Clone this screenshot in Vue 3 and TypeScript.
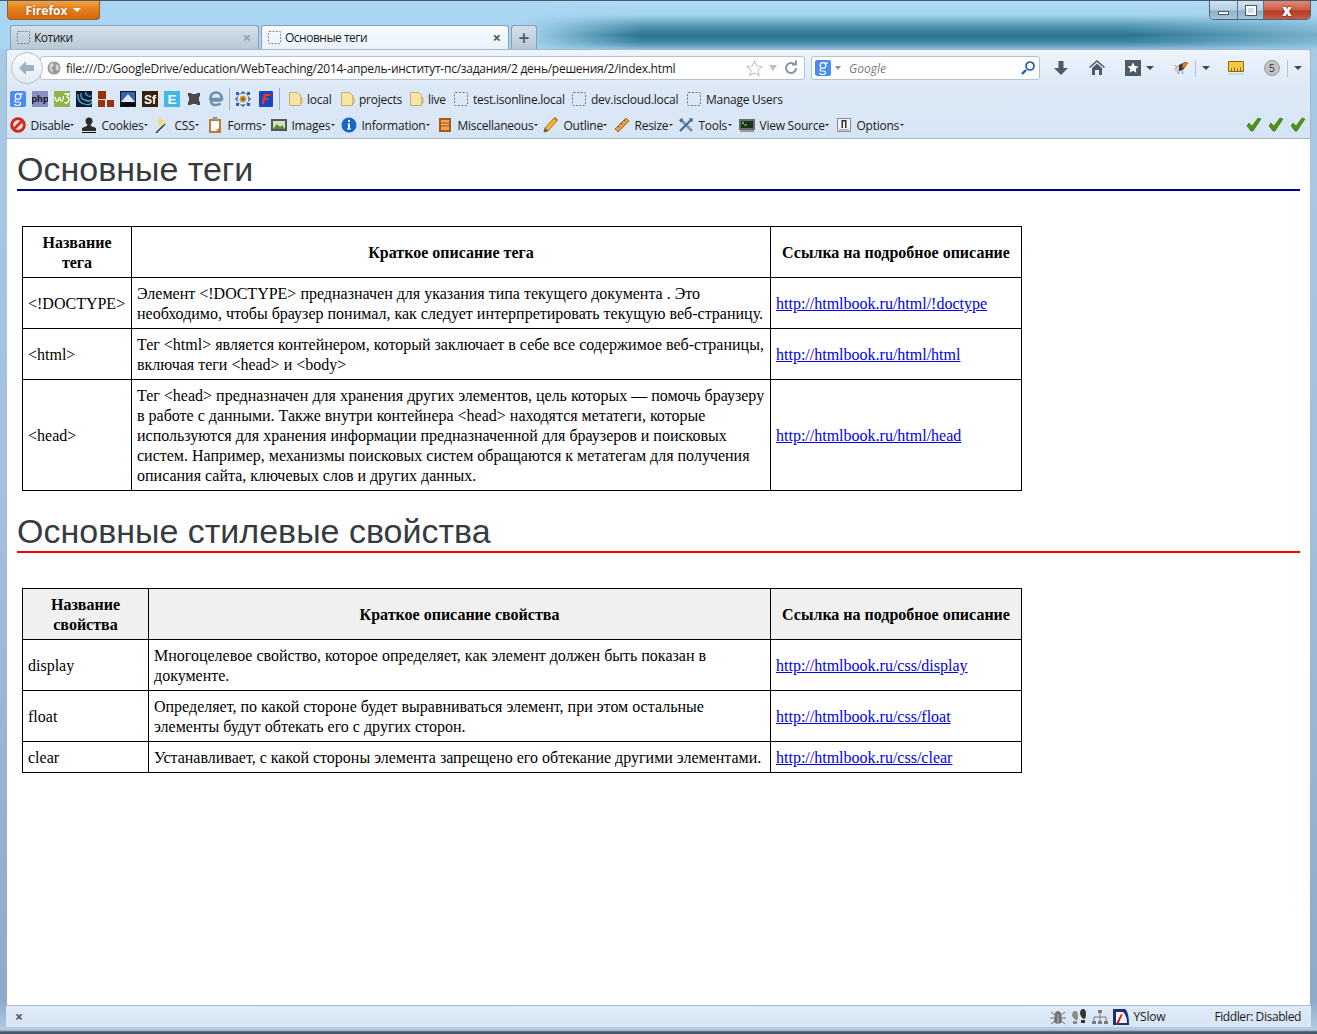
<script setup lang="ts">
interface Shape {
  d?: string
  f?: string
  s?: string
  w?: number
  t?: string
  x?: number
  y?: number
  z?: number
}

const disc = (x: number, y: number, r: number) =>
  `M${x - r} ${y}a${r} ${r} 0 1 0 ${r * 2} 0a${r} ${r} 0 1 0 ${-r * 2} 0z`
const label = (t: string, x: number, y: number, z: number, f: string): Shape => ({ t, x, y, z, f })

const icons: Record<string, Shape[]> = {
  google: [{ d: 'M0 2q0-2 2-2h12q2 0 2 2v12q0 2-2 2H2q-2 0-2-2z', f: '#4a8af4' }, { d: disc(8, 5.500, 2.800), f: 'none', s: '#fff', w: 1.300 }, { d: 'M6 8.500q-2 1.500 0 2.500h3q2 .5 1.500 2t-3 1.500-3-1.500', f: 'none', s: '#fff', w: 1.200 }, { d: 'M10 3h3', s: '#fff', w: 1.200 }],
  php: [{ d: 'M0 0h16v16H0z', f: '#8a8cc4' }, label('php', 8, 11, 9.500, '#111')],
  w3: [
    { d: 'M0 0h16v16H0z', f: '#8cb44a' },
    { d: 'M1 6q1 5 2.500 4T5.500 6q.5 4 2 4t2-5M10.500 3H15l-2 3q3 1 1.500 4t-4 1.500', s: '#fff', w: 1.300, f: 'none' },
  ],
  jquery: [
    { d: 'M0 0h16v16H0z', f: '#101e2c' },
    { d: 'M2 3q-1 8 6 10t8-2M5 2q-1 6 5 7.500t6-1.500M10 1q-1 3 2 4t3-.5', s: '#4aa8dc', w: 1.300, f: 'none' },
  ],
  blocks: [{ d: 'M0 0h8v8H0zM0 9h7v7H0zM9 9h7v7H9z', f: '#993305' }],
  mountain: [
    { d: 'M0 0h16v16H0z', f: '#0c1624' },
    { d: 'M1 1h14v10H1z', f: '#3a62a8' },
    { d: 'M1 11l7-8 7 8z', f: '#dce8f8' },
    { d: 'M1 11h14v4H1z', f: '#05070c' },
  ],
  sf: [{ d: 'M0 0h16v16H0z', f: '#38200a' }, label('Sf', 8, 12.500, 12, '#fff')],
  e: [{ d: 'M0 0h16v16H0z', f: '#3fb9ea' }, label('E', 8, 13, 13.500, '#fff')],
  puzzle: [{ d: 'M2 2h3l1 1h4l1-1h3v3l-1 1v4l1 1v3h-3l-1-1H6l-1 1H2v-3l1-1V6L2 5z', f: '#4a4a4a' }],
  ie: [
    { d: 'M13.500 9.500H3q0 4.500 4.500 4.500 3 0 5-1.500M2.500 8q0-6.500 5.500-6.500T14 8z', f: 'none', s: '#6d91a8', w: 2.600 },
  ],
  target: [
    { d: 'M8 0l8 8-8 8-8-8z', f: '#2a5fb8' },
    { d: 'M1 1h3v3H1zM12 1h3v3h-3zM1 12h3v3H1zM12 12h3v3h-3z', f: '#2a5fb8' },
    { d: disc(8, 8, 5.500), f: '#e8eef8' },
    { d: disc(8, 8, 3.500), f: '#e09a20' },
    { d: disc(8, 8, 1.500), f: '#2a5fb8' },
  ],
  firebird: [
    { d: 'M1 1q0-1 1-1h12q1 0 1 1v14q0 1-1 1H2q-1 0-1-1z', f: '#1b45c9' },
    { d: 'M6 3h7l-1 2H8l-.5 2H11l-1 2H7l-1 4H3.500z', f: '#f03a10' },
  ],
  folder: [
    { d: 'M2.500 1.500h8l3 2.500v10.500h-11z', f: '#f7e6a3', s: '#c2ad6a', w: 1 },
    { d: 'M13.500 6l1.500 1v5l-1.500 1', f: '#e8cf85', s: '#c2ad6a', w: 1 },
  ],
  blank: [{ d: 'M2.500 1.500h11q1 0 1 1v11q0 1-1 1h-11q-1 0-1-1v-11q0-1 1-1z', f: 'none', s: '#747474', w: 1 }],
  disable: [
    { d: disc(8, 8, 7.800), f: '#d0281c' },
    { d: disc(8, 8, 4.800), f: '#fbe9e6' },
    { d: 'M3.500 10.500l7-7 2 2-7 7z', f: '#d0281c' },
  ],
  cookies: [
    { d: disc(8, 4, 3.500), f: '#2e2a26' },
    { d: 'M6.500 6h3l.5 3 5 2v3H1v-3l5-2z', f: '#2e2a26' },
    { d: 'M1 15h14v1H1z', f: '#111' },
  ],
  css: [
    { d: 'M1.500 15.500l9-9 1 1-9 9z', f: '#333' },
    { d: 'M10 6l4-5 1 1-4 5z', f: '#ddd' },
    { d: 'M6 0l1.500 3L11 2 9 5l1 3-3-1-3 2 .5-3.500L2 3.500l3 0z', f: '#f6dd6a' },
  ],
  forms: [
    { d: 'M2 2h12v14H2z', f: '#c07a32' },
    { d: 'M4 4h8v7l-3 3H4z', f: '#fdfdfd' },
    { d: 'M5.500 0h5v3h-5z', f: '#9a9a9a' },
  ],
  images: [
    { d: 'M0 2h16v12H0z', f: '#555' },
    { d: 'M2 4h12v8H2z', f: '#d2e4b4' },
    { d: 'M2 12l4-5 3 3 2-2 3 4z', f: '#5c8a3a' },
  ],
  info: [
    { d: disc(8, 8, 7.500), f: '#1566c8' },
    { d: 'M7 3h2v2H7zM6.500 6.500h2.500v5h1v1H6v-1h1v-4h-.5z', f: '#fff' },
  ],
  misc: [
    { d: 'M2 1h12v14H2z', f: '#a8581a' },
    { d: 'M4 3h8v10H4z', f: '#eda552' },
    { d: 'M4 6h8M4 9h8', s: '#a8581a', w: 1 },
  ],
  outline: [
    { d: 'M1 15l1-4L11 1l3 3L5 14z', f: '#f2b134', s: '#b8741c', w: 1 },
    { d: 'M11 1l3 3 1-1-3-3z', f: '#d84a3a' },
    { d: 'M1 15l1-4 3 3z', f: '#555' },
  ],
  resize: [
    { d: 'M1 12L12 1l3 3L4 15z', f: '#e0a050', s: '#a86a22', w: 1 },
    { d: 'M4 9l1.500 1.500M7 6l1.500 1.500M10 3l1.500 1.500', s: '#8a5210', w: 1 },
  ],
  tools: [
    { d: 'M3 3l11 11', s: '#7f93a8', w: 2.600 },
    { d: 'M13 3L2 14', s: '#3d6f9e', w: 2.200 },
    { d: 'M1 3.500L3.500 1l2 2L3 5.500zM11 1l4 .5-.5 3.500-2.500-1.500z', f: '#5d6874' },
  ],
  source: [
    { d: 'M0 2h16v11H0z', f: '#6b6b6b' },
    { d: 'M2 4h12v7H2z', f: '#16331c' },
    { d: 'M3 5l2 1-2 1M5 8h3', s: '#7ed07e', w: 1, f: 'none' },
    { d: 'M1 13h14v2H1z', f: '#999' },
  ],
  options: [
    { d: 'M1.500 1.500h13v13h-13z', f: '#f2f2f2', s: '#8a8a8a', w: 1 },
    { d: 'M5.500 3h5v8h-1.500V4.500H7V11H5.500z', f: '#333' },
    { d: 'M3 12h10v1.500H3z', f: '#a8a8a8' },
  ],
  check: [{ d: 'M1 9l2-3 3 3 6-8 3 1-8 12H5z', f: '#4f9412', s: '#2e6a08', w: 0.600 }],
  star: [{ d: 'M8 1l2.100 4.700 5 .5-3.800 3.300 1.100 5L8 12l-4.400 2.500 1.100-5L.900 6.200l5-.5z', f: '#fff', s: '#bcc4cc', w: 1 }],
  reload: [{ d: 'M13 8a5 5 0 1 1-2-4M9 4.500h4V.5', f: 'none', s: '#8a949e', w: 2 }],
  glass: [{ d: 'M6 10l-4 4', s: '#1e5ea8', w: 2.400 }, { d: disc(10, 6, 4), f: 'none', s: '#1e5ea8', w: 1.700 }],
  download: [{ d: 'M5.500 1h5v7H15l-7 7-7-7h4.500z', f: '#4e5a66' }],
  home: [
    { d: 'M8 0l8 7-1 1-7-6-7 6-1-1z', f: '#4e5a66' },
    { d: 'M8 3.500l5 4.500v7h-3v-5H6v5H3V8z', f: '#4e5a66' },
  ],
  bookmarks: [
    { d: 'M0 0h16v16H0z', f: '#4e5a66' },
    { d: 'M8 2.500l1.700 3.400 3.800.5-2.800 2.500.7 3.800L8 10.800l-3.400 1.900.7-3.800L2.500 6.400l3.800-.5z', f: '#fff' },
  ],
  firebug: [
    { d: 'M1 9q3-5 8-5l-2 8q-4 2-6-3z', f: '#c9c9c9' },
    { d: 'M6 5l6-3 3 1-5 7-4 1z', f: '#3a3a3a' },
    { d: 'M10 3l5-1-2 5-4 1z', f: '#e87a1a' },
    { d: 'M6 12l-1 2M9 11l1 3M2 5l2 2', s: '#888', w: 1 },
  ],
  ruler: [
    { d: 'M.5 1.500h15v10h-15z', f: '#f5c93e', s: '#8d6a14', w: 1 },
    { d: 'M3.500 11V8.500M6.500 11V7.500M9.500 11V8.500M12.500 11V7.500', s: '#8a6a12', w: 1 },
    { d: 'M0 14h16', s: '#b0c4d8', w: 1 },
  ],
  bug: [
    { d: 'M5 4q3-4 6 0l1 9q-4 4-8 0z', f: '#6e6e6e' },
    { d: 'M5 6L1 3M5 9H0M5 12l-4 3M11 6l4-3M11 9h5M11 12l4 3', s: '#6e6e6e', w: 1 },
    { d: 'M8 5v10', s: '#bbb', w: 1 },
  ],
  feet: [
    { d: 'M1 7q0-5 3-5t3 5-2 4-4-4zM2 12h4v3H2z', f: '#8a8a8a' },
    { d: 'M9 5q0-5 3-5t3 5-2 5-4-5zM10 11h4v3h-4z', f: '#333' },
  ],
  tree: [
    { d: 'M6 1h4v3H6zM0 12h4v3H0zM6 12h4v3H6zM12 12h4v3h-4z', f: '#7a7a7a' },
    { d: 'M8 4v8M2 12V8h12v4', f: 'none', s: '#7a7a7a', w: 1 },
  ],
  yslow: [
    { d: 'M0 0h12q4 3 4 16H0z', f: '#1c2f78' },
    { d: 'M3 3h7q4 3 4 11H3z', f: '#f4f6fb' },
    { d: 'M3 15l5-10 1.500.5L5 16z', f: '#d01616' },
  ],
}

const bookmarks = [
  { icon: 'folder', text: 'local', w: 52 },
  { icon: 'folder', text: 'projects', w: 69 },
  { icon: 'folder', text: 'live', w: 45 },
  { icon: 'blank', text: 'test.isonline.local', w: 118 },
  { icon: 'blank', text: 'dev.iscloud.local', w: 115 },
  { icon: 'blank', text: 'Manage Users', w: 100 },
]

const addons = [
  { icon: 'disable', text: 'Disable', w: 71 },
  { icon: 'cookies', text: 'Cookies', w: 73 },
  { icon: 'css', text: 'CSS', w: 53 },
  { icon: 'forms', text: 'Forms', w: 64 },
  { icon: 'images', text: 'Images', w: 70 },
  { icon: 'info', text: 'Information', w: 96 },
  { icon: 'misc', text: 'Miscellaneous', w: 106 },
  { icon: 'outline', text: 'Outline', w: 71 },
  { icon: 'resize', text: 'Resize', w: 64 },
  { icon: 'tools', text: 'Tools', w: 61 },
  { icon: 'source', text: 'View Source', w: 97 },
  { icon: 'options', text: 'Options', w: 70 },
]

const tagRows = [
  {
    name: '<!DOCTYPE>',
    text: 'Элемент <!DOCTYPE> предназначен для указания типа текущего документа . Это необходимо, чтобы браузер понимал, как следует интерпретировать текущую веб-страницу.',
    link: 'http://htmlbook.ru/html/!doctype',
  },
  {
    name: '<html>',
    text: 'Тег <html> является контейнером, который заключает в себе все содержимое веб-страницы, включая теги <head> и <body>',
    link: 'http://htmlbook.ru/html/html',
  },
  {
    name: '<head>',
    text: 'Тег <head> предназначен для хранения других элементов, цель которых — помочь браузеру в работе с данными. Также внутри контейнера <head> находятся метатеги, которые используются для хранения информации предназначенной для браузеров и поисковых систем. Например, механизмы поисковых систем обращаются к метатегам для получения описания сайта, ключевых слов и других данных.',
    link: 'http://htmlbook.ru/html/head',
  },
]

const propRows = [
  {
    name: 'display',
    text: 'Многоцелевое свойство, которое определяет, как элемент должен быть показан в документе.',
    link: 'http://htmlbook.ru/css/display',
  },
  {
    name: 'float',
    text: 'Определяет, по какой стороне будет выравниваться элемент, при этом остальные элементы будут обтекать его с других сторон.',
    link: 'http://htmlbook.ru/css/float',
  },
  {
    name: 'clear',
    text: 'Устанавливает, с какой стороны элемента запрещено его обтекание другими элементами.',
    link: 'http://htmlbook.ru/css/clear',
  },
]
</script>

<template>
  <div class="window">
    <header class="glass">
      <div class="title-row">
        <div class="firefox">Firefox<i class="tri white"></i></div>
        <div class="controls">
          <span class="ctl"><i class="min"></i></span>
          <span class="ctl"><i class="max"></i></span>
          <span class="ctl close">x</span>
        </div>
      </div>
      <div class="tabs">
        <div class="tab">
          <svg class="ico" viewBox="0 0 16 16"><path v-for="(s, i) in icons.blank" :key="i" :d="s.d" :fill="s.f" :stroke="s.s" :stroke-width="s.w" stroke-dasharray="2 1.500" /></svg>
          <span class="tab-title">Котики</span>
          <span class="tab-x dim">×</span>
        </div>
        <div class="tab active">
          <svg class="ico" viewBox="0 0 16 16"><path v-for="(s, i) in icons.blank" :key="i" :d="s.d" :fill="s.f" :stroke="s.s" :stroke-width="s.w" stroke-dasharray="2 1.500" /></svg>
          <span class="tab-title">Основные теги</span>
          <span class="tab-x">×</span>
        </div>
        <div class="tab-new">+</div>
      </div>
    </header>

    <div class="inner">
      <div class="toolbox">
        <div class="nav-row">
          <div class="back">
            <svg viewBox="0 0 20 20" width="20" height="20"><path d="M2 10l7-7v4h8v6H9v4z" fill="#9fb0c2" /></svg>
          </div>
          <div class="urlbar">
            <svg class="globe" viewBox="0 0 16 16">
              <path :d="disc(8, 8, 7.500)" fill="#9a9a9a" />
              <path d="M3 4l4-2 1 3-3 3 2 3-1 3-3-4zM10 3l3 2 1 5-3 1-1-3z" fill="#d4d4d4" />
            </svg>
            <span class="url">file:///D:/GoogleDrive/education/WebTeaching/2014-апрель-институт-пс/задания/2 день/решения/2/index.html</span>
            <svg class="ico star" viewBox="0 0 16 16"><path v-for="(s, i) in icons.star" :key="i" :d="s.d" :fill="s.f" :stroke="s.s" :stroke-width="s.w" /></svg>
            <i class="tri pale"></i>
            <svg class="ico reload" viewBox="0 0 16 16"><path v-for="(s, i) in icons.reload" :key="i" :d="s.d" :fill="s.f" :stroke="s.s" :stroke-width="s.w" /></svg>
          </div>
          <div class="searchbar">
            <svg class="ico" viewBox="0 0 16 16"><path v-for="(s, i) in icons.google" :key="i" :d="s.d" :fill="s.f" :stroke="s.s" :stroke-width="s.w" /></svg>
            <i class="tri grey"></i>
            <span class="search-hint">Google</span>
            <svg class="ico" viewBox="0 0 16 16"><path v-for="(s, i) in icons.glass" :key="i" :d="s.d" :fill="s.f ?? 'none'" :stroke="s.s" :stroke-width="s.w" /></svg>
          </div>
          <div class="tool-icons">
            <span class="ti" v-for="n in ['download', 'home']" :key="n">
              <svg class="ico" viewBox="0 0 16 16"><path v-for="(s, i) in icons[n]" :key="i" :d="s.d" :fill="s.f" /></svg>
            </span>
            <span class="ti wide">
              <svg class="ico" viewBox="0 0 16 16"><path v-for="(s, i) in icons.bookmarks" :key="i" :d="s.d" :fill="s.f" /></svg>
              <i class="tri dark"></i>
            </span>
            <span class="ti bug-btn">
              <svg class="ico" viewBox="0 0 16 16"><path v-for="(s, i) in icons.firebug" :key="i" :d="s.d" :fill="s.f ?? 'none'" :stroke="s.s" :stroke-width="s.w" /></svg>
              <b class="vsep"></b>
              <i class="tri dark"></i>
            </span>
            <span class="ti ruler-btn">
              <svg class="ico" viewBox="0 0 16 16"><path v-for="(s, i) in icons.ruler" :key="i" :d="s.d" :fill="s.f ?? 'none'" :stroke="s.s" :stroke-width="s.w" /></svg>
            </span>
            <span class="badge">5</span>
            <b class="vsep"></b>
            <i class="tri dark last"></i>
          </div>
        </div>

        <div class="bookmarks-row">
          <span
            v-for="n in ['google', 'php', 'w3', 'jquery', 'blocks', 'mountain', 'sf', 'e', 'puzzle', 'ie']"
            :key="n"
            class="bm-icon"
          >
            <svg class="ico" viewBox="0 0 16 16">
              <template v-for="(s, i) in icons[n]" :key="i">
                <text v-if="s.t" :x="s.x" :y="s.y" :font-size="s.z" :fill="s.f" text-anchor="middle" class="svg-text">{{ s.t }}</text>
                <path v-else :d="s.d" :fill="s.f ?? 'none'" :stroke="s.s" :stroke-width="s.w" />
              </template>
            </svg>
          </span>
          <b class="hsep"></b>
          <span v-for="n in ['target', 'firebird']" :key="n" class="bm-icon tight">
            <svg class="ico" viewBox="0 0 16 16"><path v-for="(s, i) in icons[n]" :key="i" :d="s.d" :fill="s.f" /></svg>
          </span>
          <b class="hsep second"></b>
          <span v-for="b in bookmarks" :key="b.text" class="item" :style="{ width: b.w + 'px' }">
            <svg class="ico" viewBox="0 0 16 16">
              <path
                v-for="(s, i) in icons[b.icon]"
                :key="i"
                :d="s.d"
                :fill="s.f"
                :stroke="s.s"
                :stroke-width="s.w"
                :stroke-dasharray="b.icon === 'blank' ? '2 1.500' : undefined"
              />
            </svg>
            <span>{{ b.text }}</span>
          </span>
        </div>

        <div class="addons-row">
          <span v-for="a in addons" :key="a.text" class="item addon" :style="{ width: a.w + 'px' }">
            <svg class="ico" viewBox="0 0 16 16"><path v-for="(s, i) in icons[a.icon]" :key="i" :d="s.d" :fill="s.f ?? 'none'" :stroke="s.s" :stroke-width="s.w" /></svg>
            <span>{{ a.text }}</span><i class="tiny"></i>
          </span>
          <span class="checks">
            <svg v-for="k in 3" :key="k" class="ico" viewBox="0 0 16 16"><path v-for="(s, i) in icons.check" :key="i" :d="s.d" :fill="s.f" :stroke="s.s" :stroke-width="s.w" /></svg>
          </span>
        </div>
      </div>

      <main class="content">
        <h1 class="blue">Основные теги</h1>
        <table>
          <colgroup><col class="c-tag" /><col class="c-tdesc" /><col class="c-link" /></colgroup>
          <thead>
            <tr><th>Название тега</th><th>Краткое описание тега</th><th>Ссылка на подробное описание</th></tr>
          </thead>
          <tbody>
            <tr v-for="r in tagRows" :key="r.name">
              <td>{{ r.name }}</td>
              <td>{{ r.text }}</td>
              <td><a href="#">{{ r.link }}</a></td>
            </tr>
          </tbody>
        </table>

        <h1 class="red">Основные стилевые свойства</h1>
        <table class="props">
          <colgroup><col class="c-prop" /><col class="c-pdesc" /><col class="c-link" /></colgroup>
          <thead>
            <tr><th>Название свойства</th><th>Краткое описание свойства</th><th>Ссылка на подробное описание</th></tr>
          </thead>
          <tbody>
            <tr v-for="r in propRows" :key="r.name">
              <td>{{ r.name }}</td>
              <td>{{ r.text }}</td>
              <td><a href="#">{{ r.link }}</a></td>
            </tr>
          </tbody>
        </table>
      </main>

      <footer class="status">
        <span class="status-x">×</span>
        <span class="status-right">
          <svg v-for="n in ['bug', 'feet', 'tree', 'yslow']" :key="n" class="ico" viewBox="0 0 16 16">
            <path v-for="(s, i) in icons[n]" :key="i" :d="s.d" :fill="s.f ?? 'none'" :stroke="s.s" :stroke-width="s.w" />
          </svg>
          <span class="yslow">YSlow</span>
          <span class="fiddler">Fiddler: Disabled</span>
        </span>
      </footer>
    </div>
  </div>
</template>

<style>
html,
body {
  margin: 0;
  overflow: hidden;
}
</style>

<style scoped>
.window {
  width: 1317px;
  height: 1034px;
  display: flex;
  flex-direction: column;
  box-sizing: border-box;
  padding-bottom: 7px;
  overflow: hidden;
  font-family: "Open Sans", "Noto Sans", sans-serif;
  font-size: 12px;
  color: #1a1a1a;
  background: linear-gradient(180deg, #a9cbe6 0, #a3c0de 500px, #8ea9c9 1000px, #b4cce2 1030px, #46586a 1032px, #46586a 1034px);
}

.ico {
  width: 16px;
  height: 16px;
  flex: none;
  display: block;
}
.svg-text {
  font-family: "Liberation Sans", sans-serif;
  font-weight: 700;
}

/* Glass top */
.glass {
  height: 49px;
  flex: none;
  background:
    linear-gradient(90deg, #a9d6f2 0, #a9d6f2 520px, rgba(169, 214, 242, 0) 640px, rgba(169, 214, 242, 0) 1130px, rgba(169, 214, 242, 0.6) 1317px),
    linear-gradient(180deg, #aedbf5 0, #a4d3ee 14px, #5a9cb8 24px, #2c7490 34px, #3b86a5 41px, #93c2dd 49px);
  border-top: 1px solid #46586a;
  box-sizing: border-box;
}
.title-row {
  height: 24px;
  display: flex;
  justify-content: space-between;
  align-items: flex-start;
  padding: 0 6px 0 7px;
}
.firefox {
  width: 93px;
  height: 19px;
  box-sizing: border-box;
  display: flex;
  align-items: center;
  justify-content: center;
  gap: 6px;
  color: #fff;
  font-weight: 700;
  text-shadow: 0 0 2px #8a4005;
  background: linear-gradient(180deg, #f6a13c 0, #e57f1e 45%, #d5660f 100%);
  border: 1px solid #9a5b1e;
  border-top: 0;
  border-radius: 0 0 4px 4px;
}
.controls {
  display: flex;
  height: 19px;
  border: 1px solid #4d6478;
  border-top: 0;
  border-radius: 0 0 5px 5px;
  overflow: hidden;
  box-sizing: border-box;
}
.ctl {
  width: 27px;
  display: flex;
  align-items: center;
  justify-content: center;
  background: linear-gradient(180deg, #cfe3f1 0, #b6d0e2 50%, #8fb1c6 55%, #a6c6d8 100%);
  border-right: 1px solid #5c7388;
}
.ctl + .ctl {
  width: 25px;
}
.ctl .min {
  width: 9px;
  height: 2px;
  margin-top: 6px;
  background: #fff;
  border: 1px solid #4a5a6a;
}
.ctl .max {
  width: 6px;
  height: 5px;
  background: #cfe0ec;
  border: 2px solid #fff;
  outline: 1px solid #4a5a6a;
}
.ctl.close {
  width: 46px;
  border: 0;
  background: linear-gradient(180deg, #df8a78 0, #cf5a44 50%, #b83a24 55%, #c95a44 100%);
  color: #fff;
  font-weight: 800;
  font-size: 15px;
  line-height: 1;
  text-shadow: 0 0 2px #3a1010;
}

/* Tabs */
.tabs {
  display: flex;
  height: 24px;
  padding-left: 10px;
  gap: 2px;
}
.tab {
  width: 249px;
  box-sizing: border-box;
  padding: 0 7px 0 5px;
  display: flex;
  align-items: center;
  gap: 3px;
  border: 1px solid #8b9db0;
  border-bottom: 0;
  border-radius: 3px 3px 0 0;
  background: linear-gradient(180deg, #d4e0ea 0, #b9c8d6 100%);
}
.tab.active {
  width: 248px;
  background: linear-gradient(180deg, #f8fbfe 0, #e9f2fb 100%);
}
.tab .ico {
  width: 15px;
  height: 15px;
}
.tab-title {
  flex: 1;
  letter-spacing: -0.5px;
}
.tab-x {
  font-size: 15px;
  font-weight: 700;
  line-height: 1;
  color: #555;
}
.tab-x.dim {
  color: #93a0ac;
}
.tab-new {
  width: 26px;
  display: flex;
  align-items: center;
  justify-content: center;
  border: 1px solid #8b9db0;
  border-bottom: 0;
  border-radius: 3px 3px 0 0;
  box-sizing: border-box;
  background: linear-gradient(180deg, #d4e0ea 0, #b9c8d6 100%);
  color: #4e5a66;
  font-size: 19px;
  font-weight: 600;
}

/* Toolbars */
.inner {
  flex: 1;
  min-height: 0;
  margin: 0 6px;
  display: flex;
  flex-direction: column;
}
.toolbox {
  height: 90px;
  flex: none;
  box-sizing: border-box;
  background: linear-gradient(180deg, #edf4fc 0, #dde9f7 40%, #d6e5f5 100%);
  border: 1px solid #a4b7cb;
  border-bottom: 1px solid #a3b5c8;
  border-radius: 3px 3px 0 0;
}
.nav-row {
  height: 36px;
  display: flex;
  align-items: center;
  position: relative;
  padding-left: 33px;
}
.back {
  position: absolute;
  left: 4px;
  top: 2px;
  width: 30px;
  height: 30px;
  border-radius: 50%;
  border: 1px solid #b3c0ce;
  background: linear-gradient(180deg, #fbfcfe, #e3ebf4);
  display: flex;
  align-items: center;
  justify-content: center;
  z-index: 1;
}
.urlbar,
.searchbar {
  height: 24px;
  box-sizing: border-box;
  background: #fff;
  border: 1px solid #b5c2d0;
  border-radius: 3px;
  display: flex;
  align-items: center;
}
.urlbar {
  width: 765px;
  padding-left: 6px;
  padding-right: 5px;
}
.globe {
  width: 14px;
  height: 14px;
  flex: none;
  margin-right: 5px;
}
.url {
  flex: 1;
  white-space: nowrap;
  letter-spacing: -0.26px;
}
.star {
  width: 17px;
  height: 17px;
}
.pale {
  margin: 0 6px 0 6px;
}
.searchbar {
  width: 229px;
  margin-left: 6px;
  padding: 0 3px 0 3px;
}
.search-hint {
  flex: 1;
  margin-left: 8px;
  color: #7b7b7b;
  font-style: italic;
}
.tool-icons {
  display: flex;
  align-items: center;
  padding-left: 13px;
}
.ti {
  width: 36px;
  display: flex;
  align-items: center;
}
.ti.wide {
  width: 48px;
  gap: 5px;
}
.ti.bug-btn {
  width: 55px;
  gap: 6px;
}
.ti.ruler-btn {
  width: 36px;
}
.badge {
  width: 16px;
  height: 16px;
  margin-right: 7px;
  border-radius: 50%;
  background: #c4c4c4;
  border: 1px solid #9a9a9a;
  box-sizing: border-box;
  font-size: 11px;
  line-height: 14px;
  text-align: center;
  color: #333;
}
.vsep {
  width: 1px;
  height: 17px;
  background: #b4c3d2;
  flex: none;
}
.last {
  margin-left: 6px;
}
.tri {
  width: 0;
  height: 0;
  flex: none;
  border-left: 3.5px solid transparent;
  border-right: 3.5px solid transparent;
  border-top: 4px solid #8a949e;
}
.tri.white {
  border-top-color: #fff;
  border-left-width: 4px;
  border-right-width: 4px;
}
.tri.pale {
  border-top-color: #b8c2cc;
  border-top-width: 6px;
  border-left-width: 4px;
  border-right-width: 4px;
}
.tri.grey {
  margin-left: 4px;
  border-top-color: #8f8f8f;
}
.tri.dark {
  border-top-color: #3f4a55;
  border-left-width: 4px;
  border-right-width: 4px;
}
.bookmarks-row,
.addons-row {
  height: 26px;
  display: flex;
  align-items: center;
  padding-left: 3px;
}
.bm-icon {
  width: 22px;
  flex: none;
}
.bm-icon.tight {
  width: 23px;
}
.hsep {
  width: 1px;
  height: 22px;
  background: #9fb0c2;
  margin: 0 5px 0 -1px;
  flex: none;
}
.hsep.second {
  margin: 0 7px 0 -2px;
}
.item {
  display: flex;
  align-items: center;
  gap: 4px;
  flex: none;
  white-space: nowrap;
  letter-spacing: -0.25px;
}
.addon {
  gap: 4.5px;
}
.tiny {
  display: inline-block;
  width: 0;
  height: 0;
  margin-left: -4px;
  border-left: 2px solid transparent;
  border-right: 2px solid transparent;
  border-top: 2px solid #222;
}
.checks {
  margin-left: auto;
  margin-right: 4px;
  display: flex;
  gap: 6px;
}

/* Page */
.content {
  flex: 1;
  min-height: 0;
  overflow: hidden;
  margin: 0 1px;
  background: #fff;
  color: #000;
  font-family: "Liberation Serif", serif;
  font-size: 16px;
}
h1 {
  margin: 22px 10px 0;
  padding-bottom: 2px;
  font-family: "Liberation Sans", sans-serif;
  font-size: 34px;
  font-weight: 400;
  line-height: 36px;
  color: #363b40;
  border-bottom: 2px solid;
}
h1:first-child {
  margin-top: 12px;
}
h1.blue {
  border-bottom-color: #00008b;
}
h1.red {
  border-bottom-color: #f00;
}
table {
  width: 1000px;
  table-layout: fixed;
  border-collapse: collapse;
  margin: 35px 15px 0;
  line-height: 20px;
}
th,
td {
  border: 1px solid #000;
  padding: 6px 5px 4px;
}
.props th {
  background: #f0f0f0;
}
a {
  color: #00e;
}
.c-tag { width: 109px; }
.c-tdesc { width: 639px; }
.c-prop { width: 126px; }
.c-pdesc { width: 622px; }
.c-link { width: 251px; }

/* Status bar */
.status {
  height: 22px;
  flex: none;
  box-sizing: border-box;
  display: flex;
  align-items: center;
  justify-content: space-between;
  padding: 0 10px 0 9px;
  border-top: 1px solid #a9bccf;
  background: linear-gradient(180deg, #dfeaf6, #d6e5f5);
}
.status-x {
  font-weight: 700;
  font-size: 14px;
  color: #555;
}
.status-right {
  display: flex;
  align-items: center;
  gap: 5px;
}
.yslow {
  margin-right: 44px;
  letter-spacing: -0.2px;
}
.fiddler {
  letter-spacing: -0.4px;
}
</style>
